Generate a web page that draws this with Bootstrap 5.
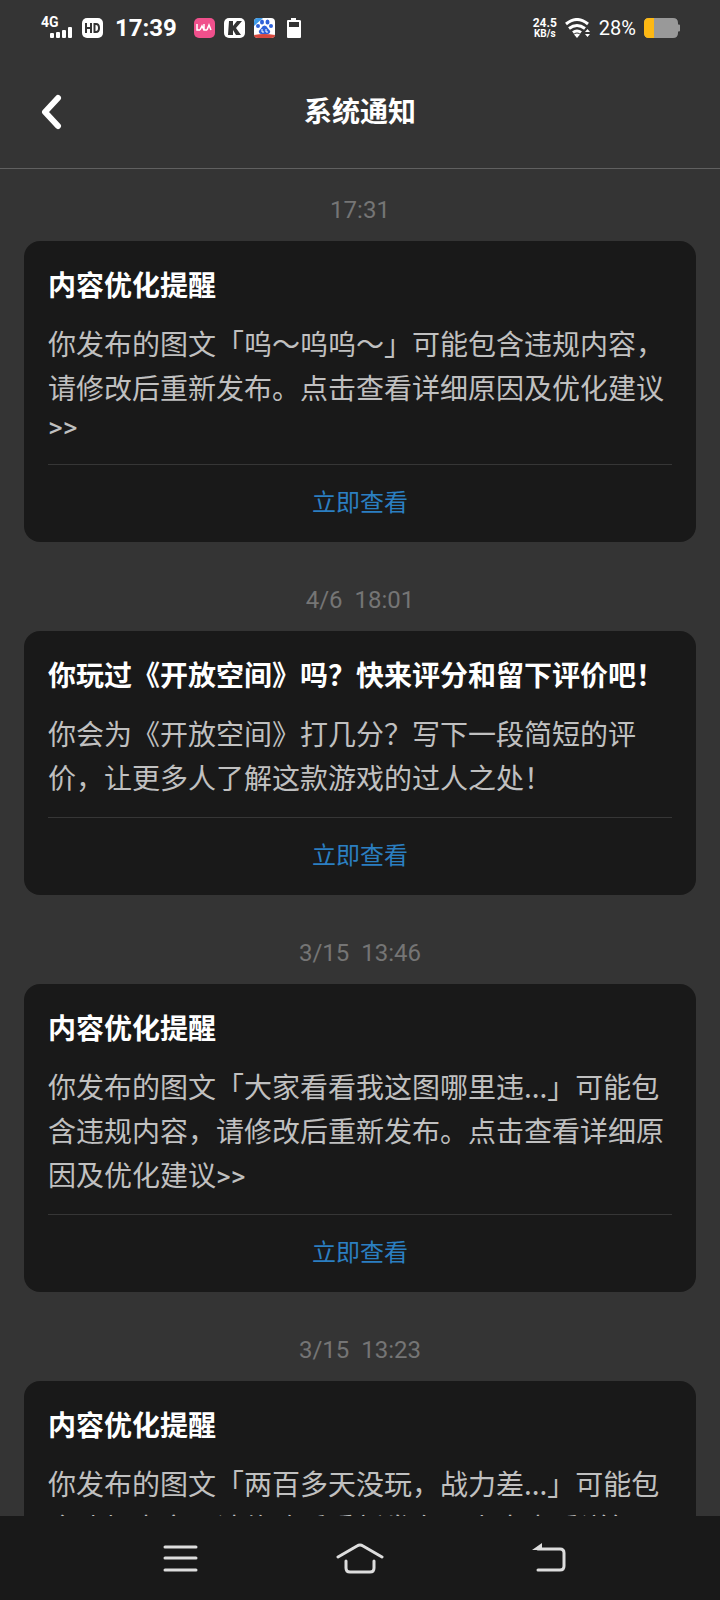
<!DOCTYPE html>
<html lang="zh-CN">
<head>
<meta charset="utf-8">
<meta name="viewport" content="width=device-width, initial-scale=1">
<title>系统通知</title>
<link href="https://cdn.jsdelivr.net/npm/bootstrap@5.3.0/dist/css/bootstrap.min.css" rel="stylesheet">
<style>
  body { background: #343434; color: #fff; font-family: Roboto, "Noto Sans CJK SC", sans-serif; }
  .status-bar { height: 56px; padding: 0 40px; }
  .signal { width: 34px; height: 24px; }
  .clock { font-size: 24px; line-height: 24px; }
  .speed { font-size: 12px; line-height: 12px; }
  .speed-unit { font-size: 10px; line-height: 10px; }
  .percent { font-size: 20px; line-height: 24px; }
  .tiny-bold { font-family: Roboto, sans-serif; font-weight: 700; }
  .title-bar { height: 113px; border-bottom: 1px solid #606060; }
  .title-bar h1, .notice h2 { font-size: 28px; line-height: 41px; font-weight: 700; }
  .side { width: 104px; }
  .back { padding: 0 40px; line-height: 0; }
  .feed { padding: 27px 24px 0; }
  .stamp { font-size: 24px; line-height: 28px; margin-bottom: 17px; color: #757575; white-space: pre; }
  .notice { background: #191919; color: #fff; border-radius: 16px; padding: 25px 24px 0; margin-bottom: 44px; }
  .notice h2 { margin-bottom: 14px; }
  .notice p { font-size: 28px; line-height: 37px; margin-bottom: 18px; color: #c0c0c0; }
  .hanzi { font-family: "Noto Sans CJK SC", sans-serif; line-height: 44px; }
  .notice a { font-size: 24px; line-height: 36px; padding: 20px 0; border-top: 1px solid #363636; border-bottom: 1px solid transparent; color: #2b7fc1; }
  .nav-keys { height: 84px; padding: 0 20%; background: #191919; }
  .nav-keys .btn { line-height: 0; }
</style>
</head>
<body>
<div class="d-flex flex-column vh-100 overflow-hidden">
  <div class="status-bar d-flex align-items-center justify-content-between flex-shrink-0">
    <div class="d-flex align-items-center">
      <svg class="signal overflow-visible" viewBox="0 0 34 24" fill="#fff" aria-hidden="true">
        <text class="tiny-bold" x="1" y="11" font-size="14">4G</text>
        <rect x="10" y="17" width="4" height="5" rx="1"/><rect x="16" y="16" width="4" height="6" rx="1"/>
        <rect x="22" y="14" width="4" height="8" rx="1"/><rect x="28" y="11" width="4" height="11" rx="1"/>
      </svg>
      <svg class="ms-2" width="21" height="21" viewBox="0 0 21 21" aria-hidden="true">
        <rect width="21" height="20" rx="5" fill="#fff"/>
        <path d="M4 5v10M9 5v10M4 10h5M12.500 6v8h1.500q3 0 3-4t-3-4z" fill="none" stroke="#333" stroke-width="2"/>
      </svg>
      <span class="clock fw-bold ms-2 ps-1">17:39</span>
      <svg class="ms-3" width="108" height="22" viewBox="1 0 108 22" aria-hidden="true">
        <rect x="2" y="1" width="21" height="20" rx="5" fill="#f0508c"/>
        <path d="M5 7v6h3M8 13l2-4 2 4M12 7v6h3M15 13l2-5 2 5" fill="none" stroke="#fff" stroke-width="1.500"/>
        <rect x="32" y="1" width="21" height="20" rx="5" fill="#fff"/>
        <path d="M37 4h4v5l4-5h5l-6 7 5 7h-5l-3-5v5h-5z" fill="#333"/>
        <rect x="62" y="1" width="21" height="20" rx="4" fill="#fff"/>
        <path d="M66 1h5l-9 8V5q0-4 4-4z" fill="#3d9be9"/>
        <g fill="#2f62d9"><ellipse cx="70" cy="5" rx="2" ry="2.500"/><ellipse cx="75.500" cy="5" rx="2" ry="2.500"/><ellipse cx="66" cy="9" rx="2" ry="2"/><ellipse cx="79" cy="9" rx="2" ry="2"/><path d="M72.500 8.500q2 0 3.500 3 2.500 2 2 4-1 2-5.500 2t-5.500-2q-.500-2 2-4 1.500-3 3.500-3z"/></g>
        <path d="M70 12v3h2M74 12v3h2" fill="none" stroke="#fff"/>
        <path d="M62 18q10-2 21 0 0 3-4 3H66q-4 0-4-3z" fill="#d8483e"/>
        <path d="M99 1h5v2h3q2 0 2 1v16q0 1-1 1H96q-1 0-1-1V4q0-1 1-1h3z" fill="#fff"/>
        <rect x="97" y="5" width="10" height="5" fill="#333"/>
      </svg>
    </div>
    <div class="d-flex align-items-center">
      <div class="text-center fw-bold me-2"><div class="speed">24.5</div><div class="speed-unit">KB/s</div></div>
      <svg width="26" height="20" viewBox="0 0 26 20" fill="none" stroke="#fff" stroke-width="3" aria-hidden="true">
        <path d="M1 6q11-9 22 0M4 10.500q8-6 16 0M8 14.500q4-3 8 0"/><path d="M9 16.500q3-2 6 0L12 20z" fill="#fff" stroke="none"/>
        <path d="M20 14l2.500-3 2.500 3zM20 16l2.500 3 2.500-3z" fill="#fff" stroke="none"/>
      </svg>
      <span class="percent ms-2">28%</span>
      <svg class="ms-2" width="36" height="20" viewBox="0 0 36 20" aria-hidden="true">
        <path d="M5 0h24q5 0 5 5v1.500h1q1 0 1 1v5q0 1-1 1h-1V15q0 5-5 5H5q-5 0-5-5V5q0-5 5-5z" fill="#999"/>
        <path d="M10 0H5Q0 0 0 5v10q0 5 5 5h5z" fill="#fdb813"/>
      </svg>
    </div>
  </div>
  <header class="title-bar d-flex align-items-center flex-shrink-0">
    <div class="side"><button class="btn back border-0" type="button" aria-label="返回">
      <svg width="24" height="36" viewBox="0 0 24 36" fill="none" stroke="#fff" stroke-width="6" stroke-linecap="round" stroke-linejoin="round"><path d="M18 4L5 18l13 14"/></svg>
    </button></div>
    <h1 class="flex-grow-1 text-center mb-0">系统通知</h1>
    <div class="side"></div>
  </header>
  <main class="feed flex-grow-1 overflow-hidden">
    <div class="stamp text-center">17:31</div>
    <article class="notice">
      <h2>内容优化提醒</h2>
      <p><span class="hanzi">你发布的图文「呜～呜呜～」可能包含违规内容，请修改后重新发布。点击查看详细原因及优化建议</span>&gt;&gt;</p>
      <a class="d-block text-center text-decoration-none" href="#">立即查看</a>
    </article>
    <div class="stamp text-center">4/6  18:01</div>
    <article class="notice">
      <h2>你玩过《开放空间》吗？快来评分和留下评价吧！</h2>
      <p><span class="hanzi">你会为《开放空间》打几分？写下一段简短的评价，让更多人了解这款游戏的过人之处！</span></p>
      <a class="d-block text-center text-decoration-none" href="#">立即查看</a>
    </article>
    <div class="stamp text-center">3/15  13:46</div>
    <article class="notice">
      <h2>内容优化提醒</h2>
      <p><span class="hanzi">你发布的图文「大家看看我这图哪里违...」可能包含违规内容，请修改后重新发布。点击查看详细原因及优化建议</span>&gt;&gt;</p>
      <a class="d-block text-center text-decoration-none" href="#">立即查看</a>
    </article>
    <div class="stamp text-center">3/15  13:23</div>
    <article class="notice">
      <h2>内容优化提醒</h2>
      <p><span class="hanzi">你发布的图文「两百多天没玩，战力差...」可能包含违规内容，请修改后重新发布。点击查看详细原因及优化建议</span>&gt;&gt;</p>
      <a class="d-block text-center text-decoration-none" href="#">立即查看</a>
    </article>
  </main>
  <nav class="nav-keys d-flex align-items-center justify-content-between flex-shrink-0">
    <button class="btn border-0 px-0" type="button" aria-label="菜单"><svg width="72" height="32" viewBox="-12 0 72 32" fill="none" stroke="#ddd" stroke-width="3" stroke-linecap="round"><path d="M9 5h31M9 16h31M9 28h31"/></svg></button>
    <button class="btn border-0 px-0" type="button" aria-label="主页"><svg width="48" height="32" viewBox="0 0 48 32" fill="none" stroke="#ddd" stroke-width="3" stroke-linecap="round" stroke-linejoin="round"><path d="M2 15L21 4q3-2 6 0l19 11M10 19v7q0 4 4 4h20q4 0 4-4v-7"/></svg></button>
    <button class="btn border-0 px-0" type="button" aria-label="后退"><svg width="72" height="32" viewBox="-24 0 72 32" fill="none" stroke="#ddd" stroke-width="3" stroke-linecap="round"><path d="M10 7h22q4 0 4 4v13q0 4-4 4H10"/><path d="M4 8l10-7v7z" fill="#ddd" stroke="none"/></svg></button>
  </nav>
</div>
<script src="https://cdn.jsdelivr.net/npm/bootstrap@5.3.0/dist/js/bootstrap.bundle.min.js"></script>
</body>
</html>
